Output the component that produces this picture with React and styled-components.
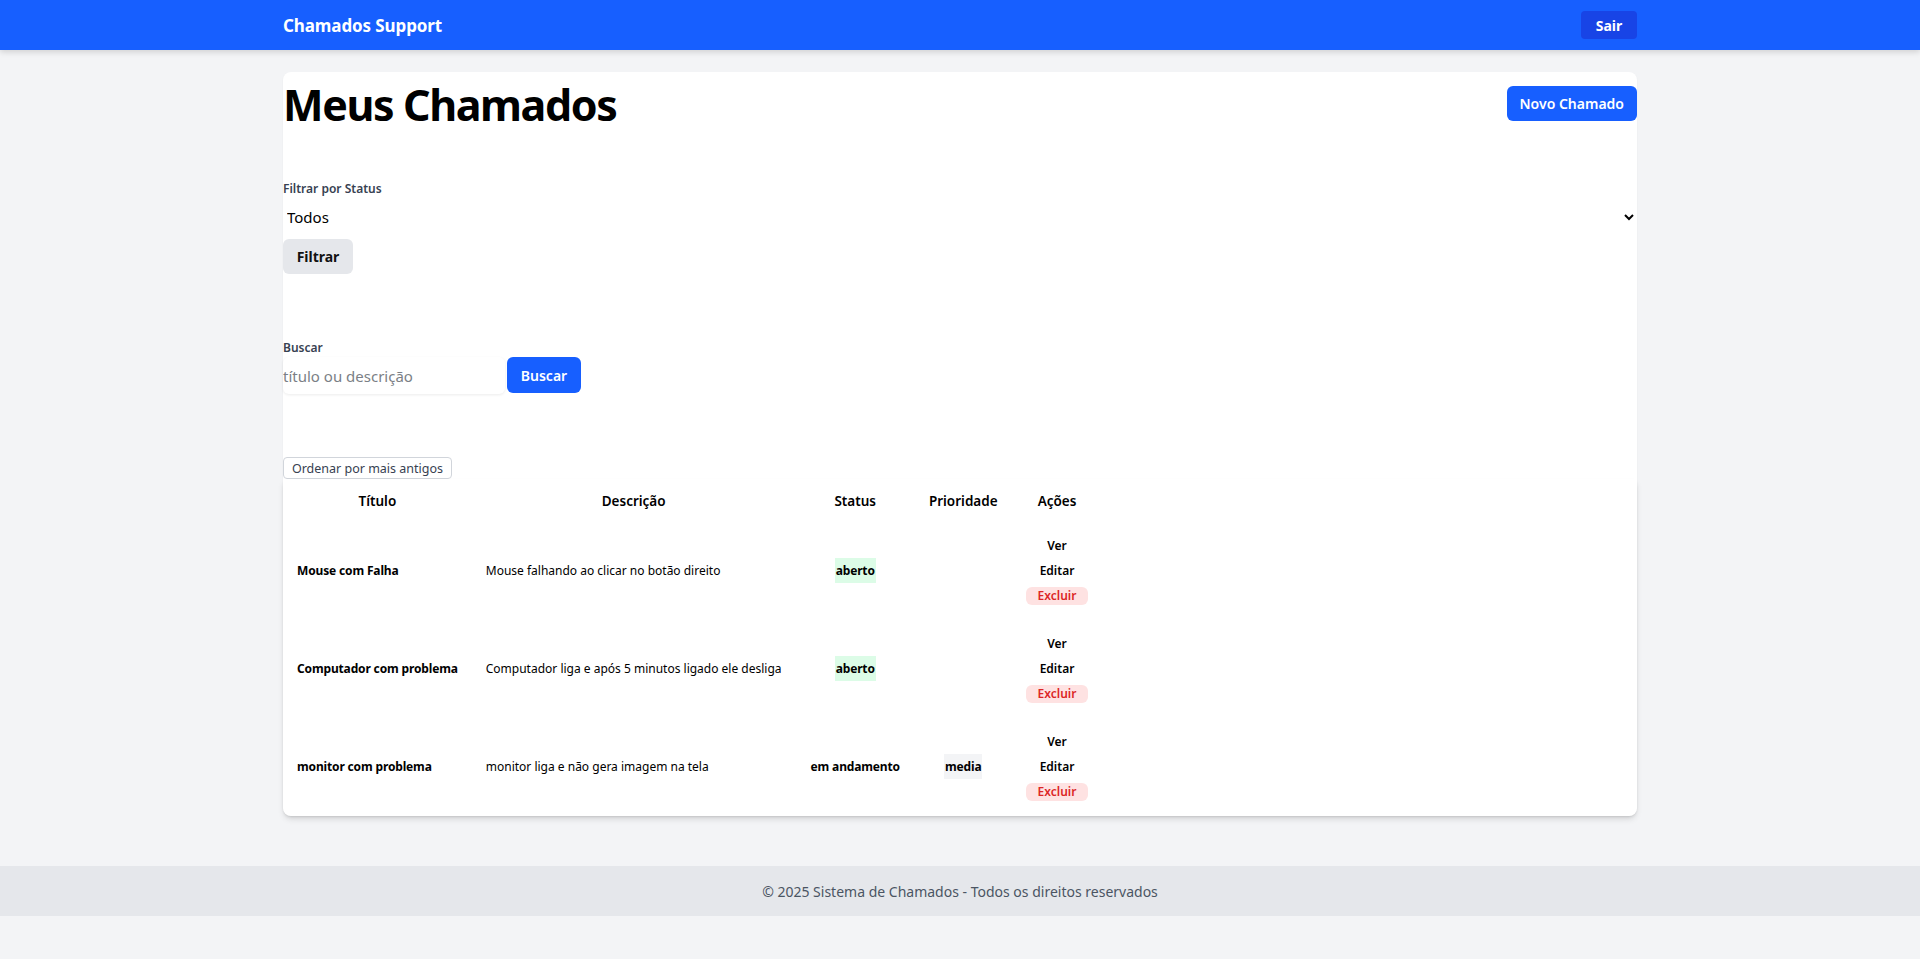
import React from 'react';
import styled, { createGlobalStyle } from 'styled-components';

const GlobalStyle = createGlobalStyle`
  body {
    margin: 0;
    background: #f3f4f6;
    font-family: 'Noto Sans', 'Open Sans', sans-serif;
    color: #000;
  }
  * { box-sizing: border-box; }
`;

// Top bar
const TopBar = styled.header`
  height: 50px;
  background: #175fff;
  box-shadow: 0 2px 6px rgba(0, 0, 0, 0.15);
`;

const Wrap = styled.div`
  width: 1354px;
  margin: 0 auto;
`;

const TopInner = styled(Wrap)`
  height: 100%;
  display: flex;
  align-items: center;
  justify-content: space-between;
`;

const Brand = styled.span`
  color: #fff;
  font-weight: 700;
  font-size: 17px;
  letter-spacing: -0.1px;
`;

const ExitButton = styled.button`
  height: 28px;
  width: 56px;
  border: none;
  border-radius: 4px;
  background: #1844e6;
  color: #fff;
  font: inherit;
  font-weight: 700;
  font-size: 14px;
`;

const Main = styled(Wrap)`
  padding-top: 22px;
`;

const Card = styled.section`
  background: #fff;
  border-radius: 8px;
  box-shadow: 0 1px 2px rgba(0, 0, 0, 0.05);
`;

const TitleRow = styled.div`
  display: flex;
  align-items: flex-start;
  justify-content: space-between;
  padding-top: 6px;
`;

const Title = styled.h1`
  margin: 0;
  padding-top: 3px;
  font-size: 43px;
  line-height: 48px;
  font-weight: 700;
  letter-spacing: -1.4px;
`;

const Button = styled.button`
  border: none;
  border-radius: 6px;
  height: ${p => p.$h || 35}px;
  padding: 0 ${p => p.$px || 12}px;
  background: ${p => (p.$variant === 'gray' ? '#e5e7eb' : '#175fff')};
  color: ${p => (p.$variant === 'gray' ? '#111' : '#fff')};
  font: inherit;
  font-size: 14px;
  font-weight: ${p => (p.$variant === 'gray' ? 700 : 600)};
`;

const NewButton = styled(Button)`
  margin-top: 8px;
`;

const FieldLabel = styled.label`
  display: block;
  margin-top: ${p => p.$mt}px;
  font-size: 12px;
  line-height: 16px;
  font-weight: 600;
  color: #374151;
`;

const StatusSelect = styled.select`
  display: block;
  width: 100%;
  height: 24px;
  margin-top: 8px;
  padding: 0;
  border: none;
  background: transparent;
  font: inherit;
  font-size: 15px;
  color: #000;
`;

const FilterButton = styled(Button)`
  margin-top: 10px;
  width: 70px;
`;

const SearchRow = styled.div`
  display: flex;
  gap: 2px;
  margin-top: 1px;
`;

const SearchInput = styled.input`
  width: 222px;
  height: 37px;
  padding: 0;
  border: none;
  border-radius: 6px;
  box-shadow: 0 1px 3px rgba(0, 0, 0, 0.08);
  font: inherit;
  font-size: 15px;
  &::placeholder { color: #7b7f86; }
`;

const SearchButton = styled(Button)`
  width: 74px;
`;

const SortButton = styled.button`
  display: block;
  margin-top: 63px;
  height: 22px;
  width: 169px;
  padding: 0;
  border: 1px solid #d1d5db;
  border-radius: 4px;
  background: #fff;
  font: inherit;
  font-size: 12.5px;
  color: #374151;
`;

const TableBox = styled.div`
  background: #fff;
  box-shadow: 0 4px 6px -1px rgba(0, 0, 0, 0.12), 0 2px 4px -2px rgba(0, 0, 0, 0.1);
  border-radius: 0 0 8px 8px;
`;

const Table = styled.table`
  border-collapse: collapse;
`;

const Th = styled.th`
  padding: 13px 14px 12px;
  font-size: 13.5px;
  line-height: 18px;
  font-weight: 600;
  text-align: center;
  white-space: nowrap;
`;

const Td = styled.td`
  padding: 14px 14px 15px;
  font-size: 12px;
  line-height: 18px;
  font-weight: ${p => (p.$bold ? 700 : 400)};
  letter-spacing: ${p => (p.$bold ? '-0.15px' : '0')};
  text-align: ${p => p.$align || 'left'};
  white-space: nowrap;
`;

const Tag = styled.span`
  display: inline-block;
  padding: 4px 1px;
  line-height: 17px;
  font-weight: 700;
  letter-spacing: -0.15px;
  background: ${p => p.$bg || 'transparent'};
`;

const Actions = styled.div`
  display: flex;
  flex-direction: column;
  align-items: center;
  gap: 5px;
  font-weight: 600;
`;

const ActionLink = styled.span`
  line-height: 20px;
`;

const DeleteLink = styled.span`
  line-height: 18px;
  padding: 0 12px;
  border-radius: 6px;
  background: #fee2e2;
  color: #dc2626;
  margin-top: 1px;
`;

const Footer = styled.footer`
  margin-top: 50px;
  height: 50px;
  background: #e5e7eb;
  display: flex;
  align-items: center;
  justify-content: center;
  color: #4b5563;
  font-size: 14px;
`;

const tickets = [
  { title: 'Mouse com Falha', desc: 'Mouse falhando ao clicar no botão direito', status: 'aberto', prio: '' },
  { title: 'Computador com problema', desc: 'Computador liga e após 5 minutos ligado ele desliga', status: 'aberto', prio: '' },
  { title: 'monitor com problema', desc: 'monitor liga e não gera imagem na tela', status: 'em andamento', prio: 'media' },
];

const statusBg = s => (s === 'aberto' ? '#dcfce7' : 'transparent');

export default function App() {
  return (
    <>
      <GlobalStyle />
      <TopBar>
        <TopInner>
          <Brand>Chamados Support</Brand>
          <ExitButton>Sair</ExitButton>
        </TopInner>
      </TopBar>

      <Main>
        <Card>
          <TitleRow>
            <Title>Meus Chamados</Title>
            <NewButton $px={13}>Novo Chamado</NewButton>
          </TitleRow>

          <FieldLabel $mt={52}>Filtrar por Status</FieldLabel>
          <StatusSelect defaultValue="todos">
            <option value="todos">Todos</option>
            <option value="aberto">Aberto</option>
            <option value="andamento">Em andamento</option>
            <option value="fechado">Fechado</option>
          </StatusSelect>
          <FilterButton $variant="gray">Filtrar</FilterButton>

          <FieldLabel $mt={66}>Buscar</FieldLabel>
          <SearchRow>
            <SearchInput placeholder="título ou descrição" />
            <SearchButton $h={36}>Buscar</SearchButton>
          </SearchRow>

          <SortButton>Ordenar por mais antigos</SortButton>

          <TableBox>
            <Table>
              <thead>
                <tr>
                  <Th>Título</Th>
                  <Th>Descrição</Th>
                  <Th>Status</Th>
                  <Th>Prioridade</Th>
                  <Th>Ações</Th>
                </tr>
              </thead>
              <tbody>
                {tickets.map(t => (
                  <tr key={t.title}>
                    <Td $bold>{t.title}</Td>
                    <Td>{t.desc}</Td>
                    <Td $align="center">
                      <Tag $bg={statusBg(t.status)}>{t.status}</Tag>
                    </Td>
                    <Td $align="center">
                      {t.prio && <Tag $bg="#f3f4f6">{t.prio}</Tag>}
                    </Td>
                    <Td $align="center">
                      <Actions>
                        <ActionLink>Ver</ActionLink>
                        <ActionLink>Editar</ActionLink>
                        <DeleteLink>Excluir</DeleteLink>
                      </Actions>
                    </Td>
                  </tr>
                ))}
              </tbody>
            </Table>
          </TableBox>
        </Card>
      </Main>

      <Footer>© 2025 Sistema de Chamados - Todos os direitos reservados</Footer>
    </>
  );
}
